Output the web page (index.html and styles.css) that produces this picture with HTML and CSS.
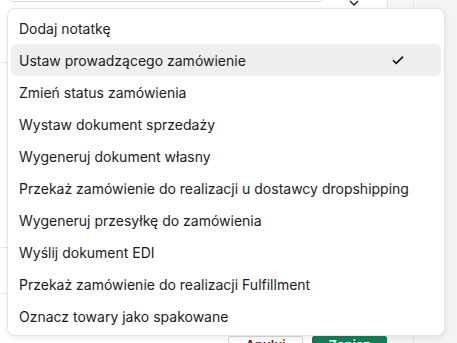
FILE: index.html
```html
<!DOCTYPE html>
<html lang="pl">
<head>
    <meta charset="UTF-8">
    <meta name="viewport" content="width=device-width, initial-scale=1.0">
    <title>Akcje zamówienia</title>
    <link rel="stylesheet" href="styles.css">
</head>
<body>
    <div class="page">
        <div class="main">
            <div class="top-row">
                <div class="field"></div>
                <svg class="chevron" width="10" height="6" viewBox="0 0 10 6">
                    <path d="M1 1 L5 5 L9 1" fill="none" stroke="#1f2a44" stroke-width="1.5"/>
                </svg>
            </div>
            <div class="row row-a"></div>
            <div class="row row-b"></div>
            <div class="row-c"></div>
            <div class="actions">
                <button class="btn btn-cancel">Anuluj</button>
                <button class="btn btn-save">Zapisz</button>
            </div>
        </div>
        <div class="side"></div>
        <div class="rest"></div>
    </div>

    <!-- menu akcji -->
    <ul class="menu">
        <li class="menu-item">Dodaj notatkę</li>
        <li class="menu-item active">Ustaw prowadzącego zamówienie
            <svg class="check" width="12" height="10" viewBox="0 0 12 10">
                <path d="M1 5.2 L4.3 8.4 L11 1.6" fill="none" stroke="#111" stroke-width="1.6"/>
            </svg>
        </li>
        <li class="menu-item">Zmień status zamówienia</li>
        <li class="menu-item">Wystaw dokument sprzedaży</li>
        <li class="menu-item">Wygeneruj dokument własny</li>
        <li class="menu-item">Przekaż zamówienie do realizacji u dostawcy dropshipping</li>
        <li class="menu-item">Wygeneruj przesyłkę do zamówienia</li>
        <li class="menu-item">Wyślij dokument EDI</li>
        <li class="menu-item">Przekaż zamówienie do realizacji Fulfillment</li>
        <li class="menu-item">Oznacz towary jako spakowane</li>
    </ul>
</body>
</html>
```

FILE: styles.css
```css
body {
    margin: 0;
    font-family: Inter, 'Liberation Sans', sans-serif;
    background: #f4f4f4;
    overflow: hidden;
}
.page {
    display: flex;
    height: 343px;
    overflow: hidden;
}
.main {
    width: 387px;
    background: #fff;
    display: flex;
    flex-direction: column;
    overflow: hidden;
}
.main > * {
    flex-shrink: 0;
}
.top-row {
    height: 63px;
    border-bottom: 1px solid #e6e6e6;
    box-sizing: border-box;
    display: flex;
    align-items: flex-start;
}
.field {
    width: 318px;
    height: 34px;
    margin-top: -32px;
    margin-left: 7px;
    border: 1px solid #dcdcdc;
    border-radius: 6px;
    box-sizing: border-box;
}
.chevron {
    margin-left: 24px;
    margin-top: 0;
}
.row {
    border-bottom: 1px solid #e6e6e6;
}
.row-a { height: 184px; }
.row-b { height: 45px; }
.row-c { height: 42px; }
.actions {
    display: flex;
    gap: 9px;
    padding-left: 228px;
}
.btn {
    width: 76px;
    height: 30px;
    border-radius: 2px;
    font-family: inherit;
    font-size: 13px;
    font-weight: 600;
    padding: 2px 0 0;
    line-height: 13px;
    display: flex;
    justify-content: center;
    align-items: flex-start;
}
.btn-cancel {
    background: #fff;
    border: 1px solid #d9d9d9;
    color: #6e1b1b;
}
.btn-save {
    background: #177c57;
    border: 1px solid #177c57;
    color: #fff;
}
.side {
    width: 25px;
    background: #f5f5f5;
    border-left: 1px solid #e3e3e3;
    border-right: 1px solid #e3e3e3;
}
.rest {
    flex: 1;
    background: #f4f4f4;
}
.menu {
    position: absolute;
    left: 7px;
    top: 8px;
    width: 438px;
    box-sizing: border-box;
    margin: 0;
    padding: 3px;
    list-style: none;
    background: #fff;
    border: 1px solid #e4e4e4;
    border-radius: 8px;
    box-shadow: 0 2px 6px rgba(0, 0, 0, 0.08);
}
.menu-item {
    height: 32px;
    padding: 0 8px;
    display: flex;
    align-items: center;
    justify-content: space-between;
    font-size: 14px;
    color: #1c1c1c;
    border-radius: 6px;
    white-space: nowrap;
}
.menu-item.active {
    background: #efefef;
}
.check {
    margin-right: 29px;
}
```
